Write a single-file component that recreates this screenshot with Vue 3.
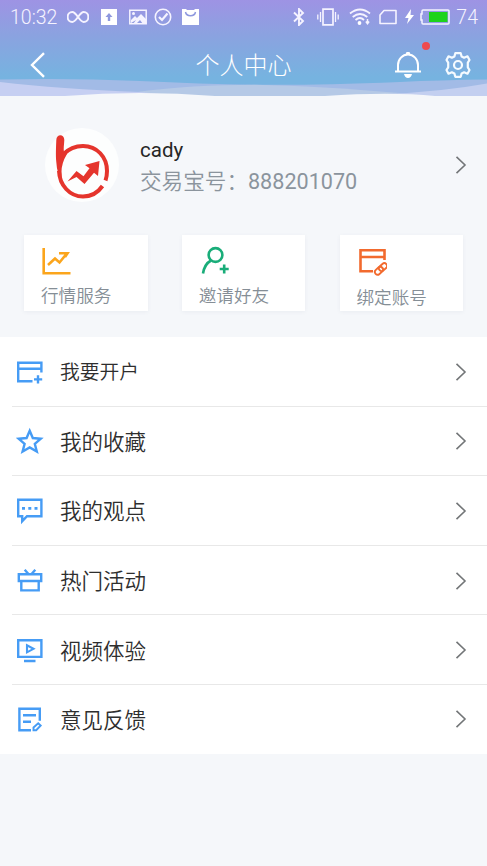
<script setup>
const cards = [
  { icon: 'chart', label: '行情服务' },
  { icon: 'invite', label: '邀请好友' },
  { icon: 'bind', label: '绑定账号' },
]
const rows = [
  { icon: 'account', label: '我要开户' },
  { icon: 'star', label: '我的收藏' },
  { icon: 'chat', label: '我的观点' },
  { icon: 'gift', label: '热门活动' },
  { icon: 'video', label: '视频体验' },
  { icon: 'note', label: '意见反馈' },
]
</script>

<template>
  <div class="page">
    <header class="header">
      <svg class="waves" viewBox="0 0 487 18" preserveAspectRatio="none">
        <path d="M0 1.500Q70 0 140 3Q200 6 255 6.700Q310 7.500 400 4Q440 2 487 1.500V18H0Z" fill="#a2bbe6" />
        <path d="M120 18L140 13.500Q190 7 255 6.700Q320 8 400 15L420 18Z" fill="#b5c9e6" />
        <path d="M0 4Q60 11 140 14L180 18H0Z" fill="#c6cff2" />
        <path d="M487 5.500Q440 14 385 16L380 18H487Z" fill="#c3cff0" />
        <path d="M65 18Q140 12 215 18ZM325 18Q390 13.500 435 18Z" fill="#f5f7fa" />
      </svg>
      <div class="status">
        <div class="status-left">
          <span class="time">10:32</span>
          <svg class="infinity" width="22" height="18" viewBox="0 0 22 18"><path d="M11 9C8.500 5.500 7 4 5.300 4a4.500 4.800 0 0 0 0 10C7 14 8.500 12.500 11 9s4-5 5.700-5a4.500 4.800 0 0 1 0 10C15 14 13.500 12.500 11 9Z" fill="none" stroke="#f5f3ff" stroke-width="2" /></svg>
          <svg class="upload" width="16" height="18" viewBox="0 0 16 18"><path d="M0 1h16v16H0Z" fill="#fff" /><path d="M8 5l3.500 4H9.200v4H6.800V9H4.500Z" fill="#8e98de" /></svg>
          <svg class="image" width="18" height="18" viewBox="0 0 18 18"><path d="M.8 2.200h16.400v13.600H.8Z" fill="none" stroke="#f5f3ff" stroke-width="1.500" /><path d="M2 12l4-4 2 2 4-4 5 5v5h-3l-3-4-4 4H4l3-4-5 3Z" fill="#f5f3ff" /><circle cx="4.500" cy="5.500" r="1.500" fill="#f5f3ff" /></svg>
          <svg class="check" width="18" height="18" viewBox="0 0 18 18" fill="none" stroke="#f5f3ff"><circle cx="9" cy="9" r="7.700" stroke-width="1.600" /><path d="M5 9l3 3 5.500-6.500" stroke-width="2.200" /></svg>
          <svg class="bag" width="17" height="18" viewBox="0 0 17 18"><path d="M0 1h4l1 1h7l1-1h4v16H0Z" fill="#fff" /><path d="M3.500 4c1 5 9 5 10 0" fill="none" stroke="#8e98de" stroke-width="1.500" /></svg>
        </div>
        <div class="status-right">
          <svg width="12" height="18" viewBox="0 0 12 18"><path d="M1 4.500l9 8.500-4 4V1l4 4-9 8.500" fill="none" stroke="#f5f3ff" stroke-width="1.900" /></svg>
          <svg class="vibrate" width="22" height="18" viewBox="0 0 22 18"><path d="M6 1.200h10v15.600H6Z" fill="none" stroke="#f5f3ff" stroke-width="1.700" /><path d="M3.500 4v10M18.500 4v10M.8 6.500v5M21.200 6.500v5" stroke="#f5f3ff" stroke-width="1.300" /></svg>
          <svg class="wifi" width="22" height="18" viewBox="0 0 22 18"><path d="M1 5.500Q11-2.500 21 5.500M3.700 9Q11 3 18.300 9M6.500 12Q11 8 15 12" fill="none" stroke="#f5f3ff" stroke-width="1.800" /><circle cx="10.500" cy="15" r="1.900" fill="#fff" /><path d="M18.500 11v5M16.900 13.500l1.600 2.300 1.600-2.300" fill="none" stroke="#f5f3ff" stroke-width="1.500" /></svg>
          <svg class="sim" width="18" height="18" viewBox="0 0 18 18"><path d="M5 2.500h12v13H1V7Z" fill="none" stroke="#f5f3ff" stroke-width="1.600" stroke-linejoin="round" /></svg>
          <svg class="bolt" width="11" height="18" viewBox="0 0 11 18"><path d="M7 1L1 10h3.500L3 16 10 7H6.500Z" fill="#fff" /></svg>
          <svg class="battery" width="30" height="18" viewBox="0 0 30 18"><path d="M3 2h25q1 0 1 1v12q0 1-1 1H3q-1 0-1-1v-3H1V6h1V3q0-1 1-1Z" fill="none" stroke="#f5f3ff" stroke-width="1.500" /><path d="M9 4h18.500v10H9Z" fill="#1ed31b" /></svg>
          <span class="percent">74</span>
        </div>
      </div>
      <nav class="nav">
        <svg class="back" width="16" height="26" viewBox="0 0 16 26"><path d="M14 1.200L2 13l12 11.800" fill="none" stroke="#fff" stroke-width="2.400" /></svg>
        <h1>个人中心</h1>
        <div class="actions">
          <span class="bell">
            <svg width="28" height="28" viewBox="0 0 28 28"><path d="M4 20v-6a10 10.500 0 0 1 20 0v6" fill="none" stroke="#fff" stroke-width="2" /><path d="M1 20.500h26" stroke="#fff" stroke-width="2" /><path d="M11.500 3.500l1-2.500h3l1 2.500ZM10 23h8q-1 4-4 4t-4-4Z" fill="#fff" /></svg>
            <i class="dot"></i>
          </span>
          <svg class="gear" width="26" height="28" viewBox="0 0 26 28" fill="none" stroke="#f5fbff" stroke-width="2.200"><path d="M10.300 2.200h5.400l.9 3.300 2.500 1.200 3.400-1.400 2 3.700-1.700 2.700v4.600l1.700 2.700-2 3.700-3.400-1.400-2.500 1.200-.9 3.300h-5.400l-.9-3.300-2.500-1.200-3.400 1.400-2-3.700 1.700-2.700v-4.600L1.500 9l2-3.700 3.400 1.400 2.500-1.200Z" stroke-linejoin="round" /><circle cx="13" cy="14" r="4" /></svg>
        </div>
      </nav>
    </header>

    <section class="profile">
      <div class="avatar">
        <svg width="74" height="74" viewBox="0 0 74 74">
          <path d="M18 26.500C23.500 21 30.500 18 38 18C52 18 62 29 62 43q0 5-1.500 9.500M57.500 58C53 64.500 46 68.500 38 68.500C24.500 68.500 14.500 57 14 43" fill="none" stroke="#e5352d" stroke-width="4" />
          <path d="M11.300 12c0-6.500 8.200-6.500 8 0c-.2 5-1 8-.3 12.500L22 26q-5.500 9-5.500 18l.5 9q-5-7-5.700-19C10.600 27 11.100 18 11.300 12Z" fill="#e5352d" />
          <path d="M22.500 53.500L31.500 43l7 5.300 6-8-4.500-3.300L54.500 33l-1.500 15-4-3.300L39.500 56l-8-7Z" fill="#e5352d" />
        </svg>
      </div>
      <div class="who">
        <div class="name">cady</div>
        <div class="number">交易宝号：<span>888201070</span></div>
      </div>
      <svg class="arrow" width="12" height="20" viewBox="0 0 12 20"><path d="M1.500 1.800L10 10l-8.500 8.200" /></svg>
    </section>

    <section class="cards">
      <div v-for="c in cards" :key="c.icon" class="card" :class="c.icon">
        <svg width="30" height="30" viewBox="0 0 30 30" fill="none" stroke-width="2.600">
          <g v-if="c.icon === 'chart'" stroke="#fba51c"><path d="M2.700 2v25.300H29.500" /><path d="M7 19l7-6.500 4.500 4L25 8.500M18 7.300h8.500L24 11" /></g>
          <g v-else-if="c.icon === 'invite'" stroke="#19ad79"><circle cx="16.500" cy="9" r="6.900" /><path d="M12 14.500Q5.500 18 4 27.500M25.200 18.500v9M20.700 23h9" /></g>
          <g v-else stroke="#f26a2e"><path d="M16 25.300H3.500V4.200h24V14M3 11h25" /><g stroke-width="1.900" transform="rotate(-42 24 23)"><rect x="16.800" y="20.200" width="9" height="5.500" rx="2.750" /><rect x="22.200" y="20.200" width="9" height="5.500" rx="2.750" /></g></g>
        </svg>
        <span>{{ c.label }}</span>
      </div>
    </section>

    <ul class="menu">
      <li v-for="r in rows" :key="r.icon" class="row" :class="r.icon">
        <svg class="row-icon" width="28" height="28" viewBox="0 0 28 28" fill="none" stroke="#469cf5" stroke-width="2.400">
          <path v-if="r.icon === 'account'" d="M16.500 23.300H2.200V4.800h23.200v9.700M2 10.800h23.500M22 17.300v8.200M18 21.400h8.200" />
          <path v-else-if="r.icon === 'star'" d="M13.700 3.800l3.100 7.200 8 .7-6 5.200 2 7.600-7.100-4-7.100 4 2-7.600-6-5.200 8-.7Z" />
          <g v-else-if="r.icon === 'chat'"><path d="M2.200 2.800h23.200v16.400H11l-4.800 5v-5h-4Z" /><path d="M6 11.300h3M12.300 11.300h3M18.500 11.300h3" stroke-width="2.800" /></g>
          <path v-else-if="r.icon === 'gift'" d="M2.800 7.200h22.400v6.800H2.800ZM5.300 15v8.400h17.400V15M8.700 2.700l3.500 4M19.300 2.700l-3.500 4" />
          <g v-else-if="r.icon === 'video'"><path d="M2.200 4.300h23.200v16.600H2.200ZM8 25h11.500" /><path d="M11 9.300v7l6.500-3.500Z" stroke-width="2.100" /></g>
          <g v-else><path d="M15 25.200H3.400V3.700h20.400v12M7 10.200h13M7 16.700h8" /><path d="M17.500 25.200v-2.700l4.700-4.300 2.500 2.300-4.500 4.700Z" stroke-width="1.900" /></g>
        </svg>
        <span class="label">{{ r.label }}</span>
        <svg class="arrow" width="12" height="20" viewBox="0 0 12 20"><path d="M1.500 1.800L10 10l-8.500 8.200" /></svg>
      </li>
    </ul>
  </div>
</template>

<style>
body { background: #f5f7fa; }
</style>

<style scoped>
.page {
  box-sizing: border-box;
  width: 487px;
  height: 866px;
  background: #f5f7fa;
  font-family: Roboto, "Noto Sans CJK SC", sans-serif;
  overflow: hidden;
}
svg { display: block; flex: none; }
.header {
  position: relative;
  height: 96px;
  background: linear-gradient(#9e93e4, #8ba2e0 36%, #76b3e0 80%, #76b3e0);
}
.waves { position: absolute; left: 0; bottom: 0; width: 487px; height: 18px; }
.status {
  display: flex;
  justify-content: space-between;
  height: 34px;
  padding: 0 9px 0 10px;
  color: #f5f3ff;
  font-size: 19.500px;
  font-weight: 350;
}
.status-left, .status-right { display: flex; align-items: center; }
.time { width: 57px; }
.upload { margin-left: 12px; }
.image { margin-left: 12px; }
.check { margin-left: 7px; }
.bag { margin-left: 10px; }
.vibrate { margin-left: 12px; }
.wifi { margin-left: 10px; }
.sim { margin-left: 8px; }
.bolt { margin-left: 7px; }
.battery { margin-left: 5px; }
.percent { margin-left: 6px; }
.nav {
  display: grid;
  grid-template-columns: 1fr auto 1fr;
  align-items: center;
  height: 62px;
  padding: 0 16px 0 30px;
}
.nav h1 {
  margin: 2px 0 0 -14px;
  color: #fff;
  font-size: 24px;
  font-weight: 300;
  line-height: 60px;
}
.actions { display: flex; justify-content: flex-end; gap: 23px; }
.bell { position: relative; }
.dot {
  position: absolute;
  top: -9px;
  right: -8px;
  width: 8px;
  height: 8px;
  border-radius: 50%;
  background: #ef4a4e;
}
.profile { display: flex; align-items: center; box-sizing: border-box; height: 139px; padding: 0 20px 2px 45px; }
.avatar { width: 74px; height: 74px; border-radius: 50%; background: #fdfefe; }
.who { flex: 1; margin: 2px 0 0 21px; }
.name { color: #262626; font-size: 20.500px; line-height: 32px; }
.number { color: #8b949d; font-size: 21.600px; line-height: 32px; font-weight: 350; white-space: nowrap; }
.number span { font-weight: 400; }
.arrow path { fill: none; stroke: #737678; stroke-width: 1.6; }
.cards { display: flex; justify-content: space-between; height: 102px; padding: 0 24px; box-sizing: border-box; }
.card {
  box-sizing: border-box;
  width: 123.500px;
  height: 76px;
  padding: 11px 0 0 17px;
  background: #fff;
  box-shadow: 0 1px 4px rgba(80, 100, 130, 0.07);
  color: #858e96;
  font-size: 17.600px;
  font-weight: 350;
}
.card span { display: block; line-height: 24px; margin-top: 8px; }
.card.bind span { margin-top: 10px; }
.menu { margin: 0; padding: 0; list-style: none; background: #fff; }
.row {
  position: relative;
  box-sizing: border-box;
  display: flex;
  align-items: center;
  height: 69.600px;
  padding: 0 20px 0 16px;
}
.row:last-child { height: 69px; }
.row + .row::before {
  content: "";
  position: absolute;
  top: -1px;
  left: 12px;
  right: 0;
  height: 1px;
  background: #e8e8e8;
}
.label { flex: 1; margin: -2px 0 0 16px; color: #2e2e2e; font-size: 21.500px; font-weight: 350; }
.row.account .label { font-size: 19.800px; }
</style>
